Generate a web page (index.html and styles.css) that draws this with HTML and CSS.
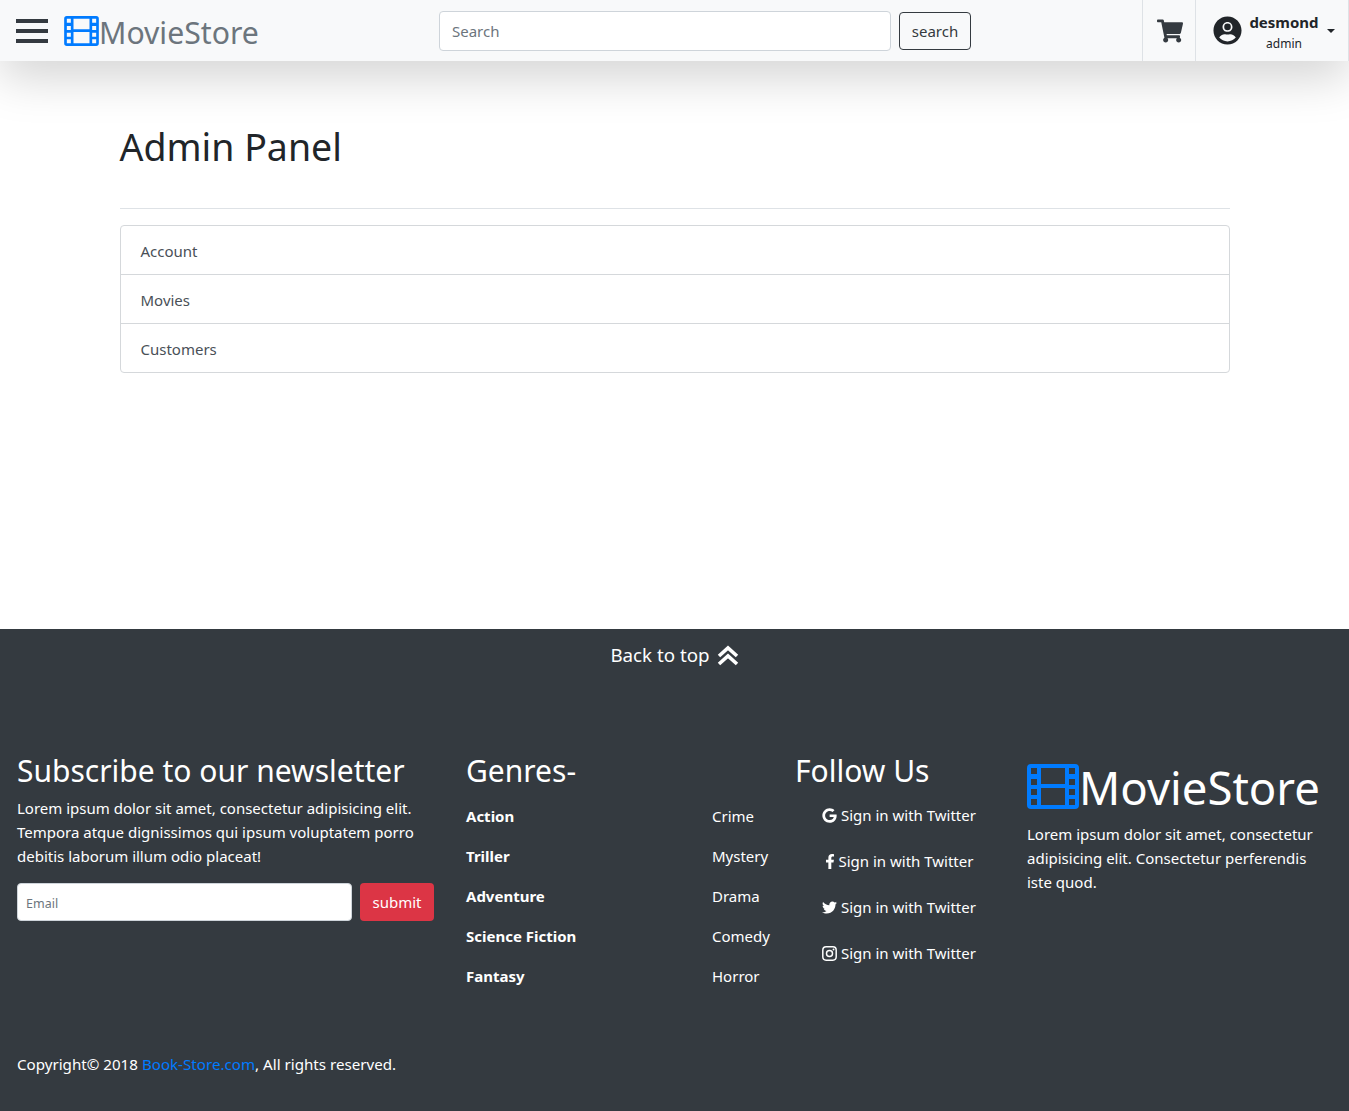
FILE: index.html
```html
<!DOCTYPE html>
<html lang="en">
<head>
    <meta charset="UTF-8">
    <meta name="viewport" content="width=device-width, initial-scale=1.0">
    <title>MovieStore - Admin Panel</title>
    <link rel="stylesheet" href="styles.css">
</head>
<body>
    <nav class="navbar">
        <div class="hamburger"><span></span><span></span><span></span></div>
        <a class="brand" href="#">
            <svg class="film-icon" viewBox="0 0 52 45"><path fill-rule="evenodd" d="M4 0h44a4 4 0 0 1 4 4v37a4 4 0 0 1-4 4H4a4 4 0 0 1-4-4V4a4 4 0 0 1 4-4zM4 4v6h6V4zM4 15v6h6v-6zM4 25v6h6v-6zM4 35v6h6v-6zM42 4v6h6V4zM42 15v6h6v-6zM42 25v6h6v-6zM42 35v6h6v-6zM14 4v16h24V4zM14 24v17h24V24z"/></svg>MovieStore
        </a>
        <form class="search-form">
            <input class="search-input" type="text" placeholder="Search">
            <button class="search-btn" type="button">search</button>
        </form>
        <div class="nav-cell cart-cell">
            <svg class="cart-icon" viewBox="0 0 576 512"><path d="M528.12 301.319l47.273-208C578.806 78.301 567.391 64 551.99 64H159.208l-9.166-44.81C147.758 8.021 137.93 0 126.529 0H24C10.745 0 0 10.745 0 24v16c0 13.255 10.745 24 24 24h69.883l70.248 343.435C147.325 417.1 136 435.222 136 456c0 30.928 25.072 56 56 56s56-25.072 56-56c0-15.674-6.447-29.835-16.824-40h209.647C430.447 426.165 424 440.326 424 456c0 30.928 25.072 56 56 56s56-25.072 56-56c0-22.172-12.888-41.332-31.579-50.405l5.517-24.276c3.413-15.018-8.002-29.319-23.403-29.319H218.117l-6.545-32h293.145c11.206 0 20.92-7.754 23.403-18.681z"/></svg>
        </div>
        <div class="nav-cell user-cell">
            <svg class="user-icon" viewBox="0 0 496 512"><path d="M248 8C111 8 0 119 0 256s111 248 248 248 248-111 248-248S385 8 248 8zm0 96c48.6 0 88 39.4 88 88s-39.4 88-88 88-88-39.4-88-88 39.4-88 88-88zm0 344c-58.7 0-111.3-26.6-146.5-68.2 18.8-35.4 55.6-59.8 98.5-59.8 2.4 0 4.8.4 7.1 1.1 13 4.2 26.6 6.9 40.9 6.9 14.3 0 28-2.7 40.9-6.9 2.3-.7 4.7-1.1 7.1-1.1 42.9 0 79.7 24.4 98.5 59.8C359.3 421.4 306.7 448 248 448z"/><circle cx="248" cy="192" r="58"/></svg>
            <div class="user-text">
                <strong>desmond</strong>
                <small>admin</small>
            </div>
            <span class="caret"></span>
        </div>
    </nav>

    <main class="container">
        <h1>Admin Panel</h1>
        <hr>
        <ul class="list-group">
            <li>Account</li>
            <li>Movies</li>
            <li>Customers</li>
        </ul>
    </main>

    <footer class="footer">
        <a class="back-top" href="#">Back to top
            <svg class="top-icon" viewBox="0 0 22 21"><path d="M2 11l9-8 9 8M2 19l9-8 9 8"/></svg>
        </a>
        <div class="footer-row">
            <section class="col-news">
                <h3>Subscribe to our newsletter</h3>
                <p>Lorem ipsum dolor sit amet, consectetur adipisicing elit.<br>Tempora atque dignissimos qui ipsum voluptatem porro<br>debitis laborum illum odio placeat!</p>
                <form class="news-form">
                    <input type="text" placeholder="Email">
                    <button type="button">submit</button>
                </form>
            </section>
            <section class="col-genres">
                <h3>Genres-</h3>
                <div class="genre-lists">
                    <ul class="genre-bold">
                        <li>Action</li>
                        <li>Triller</li>
                        <li>Adventure</li>
                        <li>Science Fiction</li>
                        <li>Fantasy</li>
                    </ul>
                    <ul>
                        <li>Crime</li>
                        <li>Mystery</li>
                        <li>Drama</li>
                        <li>Comedy</li>
                        <li>Horror</li>
                    </ul>
                </div>
            </section>
            <section class="col-follow">
                <h3>Follow Us</h3>
                <ul class="social">
                    <li><svg viewBox="0 0 488 512"><path d="M488 261.8C488 403.3 391.1 504 248 504 110.8 504 0 393.2 0 256S110.8 8 248 8c66.8 0 123 24.5 166.3 64.9l-67.5 64.9C258.5 52.6 94.3 116.6 94.3 256c0 86.5 69.1 156.6 153.7 156.6 98.2 0 135-70.4 140.8-106.9H248v-85.3h236.1c2.3 12.7 3.9 24.9 3.9 41.4z"/></svg> Sign in with Twitter</li>
                    <li><svg class="fb" viewBox="0 0 320 512"><path d="M279.14 288l14.22-92.66h-88.91v-60.13c0-25.35 12.42-50.06 52.24-50.06h40.42V6.26S260.43 0 225.36 0c-73.22 0-121.08 44.38-121.08 124.72v70.62H22.89V288h81.39v224h100.17V288z"/></svg> Sign in with Twitter</li>
                    <li><svg viewBox="0 0 512 512"><path d="M459.37 151.716c.325 4.548.325 9.097.325 13.645 0 138.72-105.583 298.558-298.558 298.558-59.452 0-114.68-17.219-161.137-47.106 8.447.974 16.568 1.299 25.34 1.299 49.055 0 94.213-16.568 130.274-44.832-46.132-.975-84.792-31.188-98.112-72.772 6.498.974 12.995 1.624 19.818 1.624 9.421 0 18.843-1.3 27.614-3.573-48.081-9.747-84.143-51.98-84.143-102.985v-1.299c13.969 7.797 30.214 12.67 47.431 13.319-28.264-18.843-46.781-51.005-46.781-87.391 0-19.492 5.197-37.36 14.294-52.954 51.655 63.675 129.3 105.258 216.365 109.807-1.624-7.797-2.599-15.918-2.599-24.04 0-57.828 46.782-104.934 104.934-104.934 30.213 0 57.502 12.67 76.67 33.137 23.715-4.548 46.456-13.32 66.599-25.34-7.798 24.366-24.366 44.833-46.132 57.827 21.117-2.273 41.584-8.122 60.426-16.243-14.292 20.791-32.161 39.308-52.628 54.253z"/></svg> Sign in with Twitter</li>
                    <li><svg viewBox="0 0 448 448"><rect class="ig" x="24" y="24" width="400" height="400" rx="100"/><circle class="ig" cx="224" cy="224" r="90"/><circle cx="344" cy="104" r="28"/></svg> Sign in with Twitter</li>
                </ul>
            </section>
            <section class="col-about">
                <div class="about-brand">
                    <svg class="film-icon" viewBox="0 0 52 45"><path fill-rule="evenodd" d="M4 0h44a4 4 0 0 1 4 4v37a4 4 0 0 1-4 4H4a4 4 0 0 1-4-4V4a4 4 0 0 1 4-4zM4 4v6h6V4zM4 15v6h6v-6zM4 25v6h6v-6zM4 35v6h6v-6zM42 4v6h6V4zM42 15v6h6v-6zM42 25v6h6v-6zM42 35v6h6v-6zM14 4v16h24V4zM14 24v17h24V24z"/></svg><span class="about-name">MovieStore</span>
                </div>
                <p>Lorem ipsum dolor sit amet, consectetur adipisicing elit. Consectetur perferendis iste quod.</p>
            </section>
        </div>
        <p class="copyright">Copyright© 2018 <a href="#">Book-Store.com</a>, All rights reserved.</p>
    </footer>
</body>
</html>
```

FILE: styles.css
```css
* {
    box-sizing: border-box;
}
body {
    margin: 0;
    font-family: "Noto Sans", "Open Sans", sans-serif;
    font-size: 15px;
    line-height: 24px;
    color: #212529;
    background: #fff;
}
ul {
    list-style: none;
    margin: 0;
    padding: 0;
}
a {
    text-decoration: none;
}

/* navbar */
.navbar {
    display: flex;
    align-items: center;
    height: 61px;
    padding-left: 16px;
    background: #f8f9fa;
    box-shadow: 0 16px 48px rgba(0, 0, 0, 0.175);
}
.hamburger {
    display: flex;
    flex-direction: column;
    gap: 6px;
    width: 32px;
    margin-right: 16px;
}
.hamburger span {
    height: 4px;
    background: #343a40;
}
.brand {
    display: flex;
    align-items: center;
    width: 375px;
    font-size: 30.2px;
    color: #6c757d;
    padding-top: 4px;
}
.brand .film-icon {
    width: 35px;
    height: 30px;
    margin-top: -4px;
}
.film-icon {
    fill: #007bff;
}
.search-form {
    display: flex;
    gap: 8px;
    align-items: center;
    width: 703px;
}
.search-input {
    width: 452px;
    height: 40px;
    padding: 6px 12px;
    border: 1px solid #ced4da;
    border-radius: 4px;
    font: inherit;
    background: #fff;
}
.search-input::placeholder,
.news-form input::placeholder {
    color: #6c757d;
}
.search-btn {
    width: 72px;
    height: 38px;
    border: 1px solid #343a40;
    border-radius: 4px;
    background: transparent;
    font: inherit;
    color: #343a40;
}
.nav-cell {
    display: flex;
    align-items: center;
    height: 61px;
    border-left: 1px solid #dee2e6;
}
.cart-cell {
    width: 53px;
    padding-left: 14px;
}
.cart-icon {
    width: 26px;
    height: 24px;
    fill: #343a40;
}
.user-cell {
    width: 154px;
    padding-left: 17px;
    border-right: 1px solid #dee2e6;
}
.user-icon {
    flex: none;
    width: 29px;
    height: 29px;
    fill: #212529;
}
.user-text {
    display: flex;
    flex-direction: column;
    align-items: center;
    width: 70px;
    margin-left: 7px;
    padding-top: 3px;
}
.user-text strong {
    font-size: 15px;
    line-height: 22px;
}
.user-text small {
    margin-top: 1px;
    font-size: 12px;
    line-height: 20px;
}
.caret {
    margin-left: 8px;
    border-top: 4px solid #212529;
    border-left: 4px solid transparent;
    border-right: 4px solid transparent;
}

/* main */
.container {
    width: 1110px;
    height: 568px;
    margin: 0 auto;
    padding-top: 56px;
}
h1 {
    margin: 0;
    font-size: 37.5px;
    font-weight: 400;
    line-height: 60px;
}
hr {
    margin: 31px 0 16px;
    border: 0;
    border-top: 1px solid #dee2e6;
}
.list-group {
    border: 1px solid #d5d8db;
    border-radius: 4px;
    background: #fff;
}
.list-group li {
    height: 49px;
    padding: 13px 20px 0;
    color: #495057;
    border-top: 1px solid #d5d8db;
}
.list-group li:first-child {
    height: 48px;
    border-top: 0;
}

/* footer */
.footer {
    height: 482px;
    padding: 0 17px;
    background: #343a40;
    color: #fff;
}
.back-top {
    display: flex;
    justify-content: center;
    align-items: center;
    gap: 7px;
    height: 54px;
    padding-bottom: 2px;
    font-size: 18.75px;
    color: #fff;
}
.top-icon {
    width: 22px;
    height: 21px;
    fill: none;
    stroke: #fff;
    stroke-width: 3.6;
}
.footer-row {
    display: flex;
    margin-top: 66px;
    height: 291px;
}
h3 {
    margin: 0;
    font-size: 30px;
    font-weight: 400;
    line-height: 44px;
}
.footer p {
    margin: 0;
}
.col-news {
    width: 449px;
}
.col-news p {
    padding-top: 3px;
}
.news-form {
    display: flex;
    gap: 8px;
    margin-top: 15px;
    width: 417px;
}
.news-form input {
    width: 335px;
    height: 38px;
    padding: 7px 8px 5px;
    border: 1px solid #ced4da;
    border-radius: 4px;
    font: inherit;
    font-size: 12.5px;
}
.news-form button {
    width: 74px;
    height: 38px;
    border: 0;
    border-radius: 4px;
    background: #dc3545;
    font: inherit;
    color: #fff;
}
.col-genres {
    width: 329px;
}
.genre-lists {
    display: flex;
    margin-top: 11px;
}
.genre-lists ul {
    display: flex;
    flex-direction: column;
    gap: 16px;
}
.genre-bold {
    width: 246px;
    font-weight: 700;
}
.col-follow {
    width: 232px;
}
.social {
    width: 208px;
    text-align: center;
    margin-top: 10px;
}
.social li {
    margin-bottom: 22px;
}
.social svg {
    width: 15px;
    height: 15px;
    fill: #fff;
    vertical-align: -2px;
}
.social svg.fb {
    width: 10px;
}
.social .ig {
    fill: none;
    stroke: #fff;
    stroke-width: 44;
}
.col-about {
    width: 305px;
}
.about-brand {
    display: flex;
    align-items: center;
    height: 46px;
    margin-top: 14px;
    margin-bottom: 13px;
    font-size: 45.5px;
    line-height: 46px;
}
.about-brand .film-icon {
    flex: none;
    width: 52px;
    height: 45px;
}
.about-name {
    padding-top: 2px;
}
.copyright {
    padding-top: 12px;
    font-size: 15.15px;
}
.copyright a {
    color: #007bff;
}
```
